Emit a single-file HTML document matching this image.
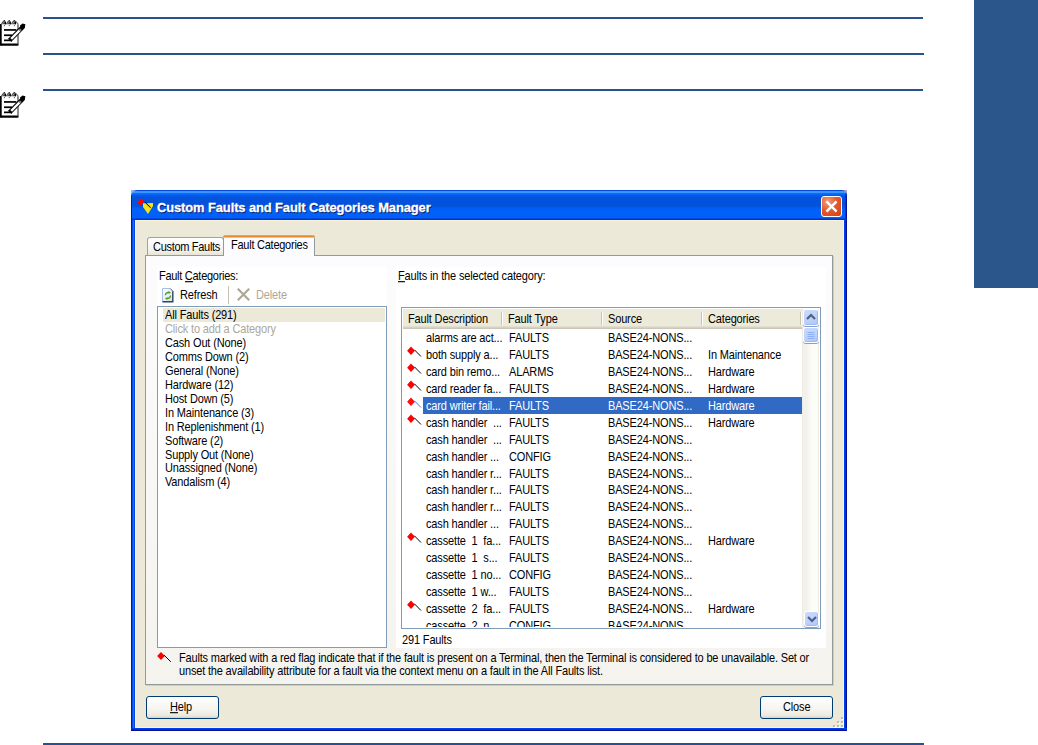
<!DOCTYPE html>
<html><head><meta charset="utf-8"><style>
*{margin:0;padding:0;box-sizing:border-box}
html,body{width:1038px;height:745px;overflow:hidden;background:#fff;font-family:"Liberation Sans",sans-serif;font-size:11px;color:#000}
.a{position:absolute}
.t{position:absolute;line-height:13px;white-space:pre;letter-spacing:-0.15px;transform:scaleY(1.12);transform-origin:0 10px}
u{text-decoration:none;background:linear-gradient(currentColor,currentColor) 0 10.8px/100% 1px no-repeat}
</style></head><body>
<svg width="0" height="0" style="position:absolute"><defs><pattern id="chk" width="2" height="2" patternUnits="userSpaceOnUse"><rect width="2" height="2" fill="#ff0000"/><rect width="1" height="1" fill="#3a60d0"/><rect x="1" y="1" width="1" height="1" fill="#3a60d0"/></pattern></defs></svg>
<div class="a" style="left:43px;top:17px;width:880px;height:2px;background:#27528e"></div>
<div class="a" style="left:43px;top:53px;width:881px;height:2px;background:#27528e"></div>
<div class="a" style="left:43px;top:89px;width:880px;height:2px;background:#27528e"></div>
<div class="a" style="left:43px;top:743px;width:881px;height:2px;background:#27528e"></div>
<div class="a" style="left:974px;top:0;width:64px;height:288px;background:#2b568c"></div>
<svg class="a" style="left:0;top:20px" width="26" height="27" viewBox="0 0 26 27">
  <rect x="1" y="4" width="17" height="20.5" fill="#fff"/>
  <rect x="0" y="4" width="1.7" height="21.5" fill="#000"/>
  <rect x="0" y="23.5" width="18.6" height="2.2" rx="1" fill="#000"/>
  <rect x="17.4" y="4.5" width="1.2" height="20" fill="#444"/>
  <path d="M0.8 4.2 Q2.6 0.2 4.4 0.4 L5.6 4.2 Z M5.8 4.2 Q7.5 0.2 9.3 0.4 L10.5 4.2 Z M10.8 4.2 Q12.5 0.2 14.3 0.4 L15.5 4.2 Z" fill="#5a5a5a"/>
  <path d="M2.5 3.6 Q3.4 2.2 4.2 2.2 M7.4 3.6 Q8.3 2.2 9.1 2.2 M12.4 3.6 Q13.3 2.2 14.1 2.2" fill="none" stroke="#9a9a9a" stroke-width="0.8"/>
  <path d="M15.3 0.9 L18.5 4.6" fill="none" stroke="#777" stroke-width="1.2"/>
  <ellipse cx="5.4" cy="2.9" rx="0.75" ry="1.7" fill="#000"/>
  <ellipse cx="10.3" cy="2.9" rx="0.75" ry="1.7" fill="#000"/>
  <ellipse cx="15.4" cy="2.9" rx="0.75" ry="1.7" fill="#000"/>
  <circle cx="4.4" cy="0.8" r="0.7" fill="#222"/><circle cx="9.3" cy="0.8" r="0.7" fill="#222"/><circle cx="14.3" cy="0.8" r="0.7" fill="#222"/>
  <circle cx="4.4" cy="5.6" r="0.6" fill="#444"/><circle cx="9.3" cy="5.6" r="0.6" fill="#444"/><circle cx="14.3" cy="5.6" r="0.6" fill="#444"/>
  <rect x="4" y="9.1" width="12.5" height="1.7" fill="#000"/>
  <rect x="4" y="14.4" width="8" height="1.7" fill="#000"/>
  <rect x="4" y="19.5" width="6" height="1.7" fill="#000"/>
  <path d="M9.6 20.4 L23 6.8" stroke="#000" stroke-width="4.4"/>
  <path d="M11.2 18.9 L19.6 10.4" stroke="#fff" stroke-width="2.3"/><path d="M19.4 10.6 L20.8 9.2" stroke="#888" stroke-width="2.3"/>
  <path d="M19.8 5.8 L22.5 3.6 L25.3 4.3 L25 7.3 L22.6 9.4 Z" fill="#000"/>
</svg>
<svg class="a" style="left:0;top:92px" width="26" height="27" viewBox="0 0 26 27">
  <rect x="1" y="4" width="17" height="20.5" fill="#fff"/>
  <rect x="0" y="4" width="1.7" height="21.5" fill="#000"/>
  <rect x="0" y="23.5" width="18.6" height="2.2" rx="1" fill="#000"/>
  <rect x="17.4" y="4.5" width="1.2" height="20" fill="#444"/>
  <path d="M0.8 4.2 Q2.6 0.2 4.4 0.4 L5.6 4.2 Z M5.8 4.2 Q7.5 0.2 9.3 0.4 L10.5 4.2 Z M10.8 4.2 Q12.5 0.2 14.3 0.4 L15.5 4.2 Z" fill="#5a5a5a"/>
  <path d="M2.5 3.6 Q3.4 2.2 4.2 2.2 M7.4 3.6 Q8.3 2.2 9.1 2.2 M12.4 3.6 Q13.3 2.2 14.1 2.2" fill="none" stroke="#9a9a9a" stroke-width="0.8"/>
  <path d="M15.3 0.9 L18.5 4.6" fill="none" stroke="#777" stroke-width="1.2"/>
  <ellipse cx="5.4" cy="2.9" rx="0.75" ry="1.7" fill="#000"/>
  <ellipse cx="10.3" cy="2.9" rx="0.75" ry="1.7" fill="#000"/>
  <ellipse cx="15.4" cy="2.9" rx="0.75" ry="1.7" fill="#000"/>
  <circle cx="4.4" cy="0.8" r="0.7" fill="#222"/><circle cx="9.3" cy="0.8" r="0.7" fill="#222"/><circle cx="14.3" cy="0.8" r="0.7" fill="#222"/>
  <circle cx="4.4" cy="5.6" r="0.6" fill="#444"/><circle cx="9.3" cy="5.6" r="0.6" fill="#444"/><circle cx="14.3" cy="5.6" r="0.6" fill="#444"/>
  <rect x="4" y="9.1" width="12.5" height="1.7" fill="#000"/>
  <rect x="4" y="14.4" width="8" height="1.7" fill="#000"/>
  <rect x="4" y="19.5" width="6" height="1.7" fill="#000"/>
  <path d="M9.6 20.4 L23 6.8" stroke="#000" stroke-width="4.4"/>
  <path d="M11.2 18.9 L19.6 10.4" stroke="#fff" stroke-width="2.3"/><path d="M19.4 10.6 L20.8 9.2" stroke="#888" stroke-width="2.3"/>
  <path d="M19.8 5.8 L22.5 3.6 L25.3 4.3 L25 7.3 L22.6 9.4 Z" fill="#000"/>
</svg>
<div class="a" style="left:131px;top:190px;width:716px;height:541px;background:#0040f0;overflow:hidden">
  <div class="a" style="left:0;top:0;width:716px;height:30px;background:linear-gradient(to bottom,#0048e0 0px,#0048e0 1px,#3d95ff 1px,#3d95ff 3px,#0a6cff 3px,#0a6cff 4px,#0058ee 5.5px,#0452dc 7.5px,#0452dc 16px,#0060fa 19px,#0060fa 28px,#0048e0 28px,#0048e0 29px,#0033c8 29px,#0033c8 30px)"></div>
  <div class="a" style="left:0;top:30px;width:4px;height:511px;background:linear-gradient(to right,#0010d0 0px,#0010d0 1px,#0a4ae8 1px,#0a4ae8 2px,#1870f5 2px,#1870f5 3px,#0048e0 3px,#0048e0 4px)"></div>
  <div class="a" style="left:713px;top:30px;width:3px;height:511px;background:linear-gradient(to right,#0040f0 0px,#0040f0 1px,#0030d8 1px,#0030d8 2px,#001090 2px,#001090 3px)"></div>
  <div class="a" style="left:4px;top:538px;width:712px;height:3px;background:linear-gradient(to bottom,#0040f0 0px,#0040f0 1px,#0030d8 1px,#0030d8 2px,#001090 2px,#001090 3px)"></div>
  <div class="a" style="left:0;top:538px;width:4px;height:3px;background:linear-gradient(to bottom,#0040f0 0px,#0030d8 1px,#0010a0 2px,#001090 3px)"></div>
  <div class="a" style="left:4px;top:30px;width:709px;height:508px;background:#ece9d8;border:1px solid #fcf3dc"></div>
</div>
<div class="a" style="left:131px;top:194px;width:1px;height:26px;background:linear-gradient(to bottom,#0030d8,#0018c8 30%,#0010d0)"></div>
<div class="a" style="left:845px;top:194px;width:1px;height:26px;background:#0038e0"></div>
<div class="a" style="left:846px;top:193px;width:1px;height:27px;background:linear-gradient(to bottom,#0030d0,#0010a0 30%,#001090)"></div>
<svg class="a" style="left:131px;top:190px" width="6" height="6" viewBox="0 0 6 6"><path d="M0 0 H6 Q1 0.5 0 6 Z" fill="#98b4ec"/></svg>
<svg class="a" style="left:842px;top:190px" width="5" height="5" viewBox="0 0 5 5"><path d="M0 0 H5 V5 Q4.5 0.6 0 0 Z" fill="#b8a0b8"/></svg>
<svg class="a" style="left:136px;top:197px" width="18" height="18" viewBox="0 0 18 18">
  <path d="M1.1 5.5 L5.4 1 L8.9 4.6 L4.5 8.9 Z" fill="#ff0000"/>
  <path d="M7 6.2 L17 6 L17 9 L12 17 L7 10 Z" fill="#f2e418"/>
  <path d="M9.1 5.2 L14.6 10.7" stroke="#000" stroke-width="1.1" stroke-dasharray="1 0.4"/>
</svg>
<div class="a" style="left:158px;top:201px;font-weight:bold;font-size:13.7px;line-height:16px;letter-spacing:-0.1px;white-space:pre;transform:scaleX(0.943);transform-origin:0 0;color:#0a1e6e;-webkit-text-stroke:0.3px #0a1e6e">Custom Faults and Fault Categories Manager</div>
<div class="a" style="left:157px;top:200px;font-weight:bold;font-size:13.7px;line-height:16px;letter-spacing:-0.1px;white-space:pre;transform:scaleX(0.943);transform-origin:0 0;color:#fff;-webkit-text-stroke:0.3px #fff">Custom Faults and Fault Categories Manager</div>
<div class="a" style="left:821px;top:196px;width:21px;height:21px;border:1px solid #fff;border-radius:3px;background:radial-gradient(circle at 30% 25%,#f0a080 0%,#e35a30 45%,#d24010 100%)"></div>
<svg class="a" style="left:821px;top:196px" width="21" height="21" viewBox="0 0 21 21"><path d="M6.3 6.3 L14.7 14.7 M14.7 6.3 L6.3 14.7" stroke="#fff" stroke-width="2.4" stroke-linecap="square"/></svg>
<div class="a" style="left:145px;top:255px;width:688px;height:430px;border:1px solid #919b9c;background:linear-gradient(to bottom,#fcfcfe 0%,#f4f3ee 100%);box-shadow:1px 1px 0 #d0cebf"></div>
<div class="a" style="left:147px;top:237px;width:77px;height:18px;border:1px solid #91a7b4;border-bottom:none;border-radius:3px 3px 0 0;background:linear-gradient(to bottom,#ffffff,#f4f3ee 70%,#e6e3d6)"></div>
<div class="t" style="left:153px;top:241px;letter-spacing:-0.3px">Custom Faults</div>
<div class="a" style="left:223px;top:235px;width:92px;height:21px;border:1px solid #919b9c;border-top:none;border-bottom:none;border-radius:3px 3px 0 0;background:#fcfcfe"></div>
<div class="a" style="left:223px;top:235px;width:92px;height:3px;border-radius:3px 3px 0 0;background:linear-gradient(to bottom,#e9a060 0px,#e9a060 1px,#e68b2c 1px,#e68b2c 2px,#ffc73c 2px,#ffc73c 3px)"></div>
<div class="t" style="left:231px;top:239px;letter-spacing:-0.25px">Fault Categories</div>
<div class="a" style="left:157px;top:267px;width:230px;height:381px;background:#fff"></div>
<div class="t" style="left:159px;top:270px;letter-spacing:-0.28px">Fault <u>C</u>ategories:</div>
<svg class="a" style="left:162px;top:288px" width="12" height="15" viewBox="0 0 12 15">
  <defs><linearGradient id="pg" x1="0" y1="0" x2="1" y2="1"><stop offset="0" stop-color="#ffffff"/><stop offset="1" stop-color="#d4def0"/></linearGradient></defs>
  <path d="M0.5 0.5 H8.5 L11 3 V14 H0.5 Z" fill="url(#pg)"/>
  <path d="M0.5 14 V0.5 H8.2" fill="none" stroke="#a8c0e8" stroke-width="1"/>
  <path d="M8.2 0.5 L11.2 3.5" fill="none" stroke="#486088" stroke-width="1"/>
  <path d="M10.8 3.2 V13.8 H0.5" fill="none" stroke="#2c4466" stroke-width="1.4"/>
  <path d="M3.3 7.3 Q3.5 4.6 6.8 4.4" fill="none" stroke="#4c9c18" stroke-width="1.15"/>
  <path d="M6.5 2.9 L8.9 4.4 L6.5 5.9 Z" fill="#4c9c18"/>
  <path d="M8.5 7.6 Q8.3 10.3 5 10.5" fill="none" stroke="#4c9c18" stroke-width="1.15"/>
  <path d="M5.4 9 L3 10.5 L5.4 12 Z" fill="#4c9c18"/>
</svg>
<div class="t" style="left:180px;top:289px;">Refresh</div>
<div class="a" style="left:228px;top:286px;width:1px;height:18px;background:#c5c2b2"></div>
<svg class="a" style="left:236px;top:287px" width="15" height="15" viewBox="0 0 15 15"><path d="M1.8 1.8 L13.2 13.2 M13.2 1.8 L1.8 13.2" stroke="#aca899" stroke-width="2.2"/></svg>
<div class="t" style="left:256px;top:289px;color:#aca899">Delete</div>
<div class="a" style="left:157px;top:306px;width:230px;height:342px;border:1px solid #7f9db9;background:#fff"></div>
<div class="a" style="left:163px;top:308px;width:222px;height:14px;background:#ece9d8"></div>
<div class="t" style="left:165px;top:309px;">All Faults (291)</div>
<div class="t" style="left:165px;top:323px;"><span style="color:#aca899">Click to add a Category</span></div>
<div class="t" style="left:165px;top:337px;">Cash Out (None)</div>
<div class="t" style="left:165px;top:351px;">Comms Down (2)</div>
<div class="t" style="left:165px;top:365px;">General (None)</div>
<div class="t" style="left:165px;top:379px;">Hardware (12)</div>
<div class="t" style="left:165px;top:393px;">Host Down (5)</div>
<div class="t" style="left:165px;top:407px;">In Maintenance (3)</div>
<div class="t" style="left:165px;top:421px;">In Replenishment (1)</div>
<div class="t" style="left:165px;top:435px;">Software (2)</div>
<div class="t" style="left:165px;top:449px;">Supply Out (None)</div>
<div class="t" style="left:165px;top:462px;">Unassigned (None)</div>
<div class="t" style="left:165px;top:476px;">Vandalism (4)</div>
<div class="a" style="left:396px;top:267px;width:430px;height:381px;background:#fff"></div>
<div class="t" style="left:398px;top:270px;"><u>F</u>aults in the selected category:</div>
<div class="a" style="left:401px;top:307px;width:420px;height:322px;border:1px solid #7f9db9;background:#fff;overflow:hidden">
<div class="a" style="left:1px;top:1px;width:399px;height:20px;background:linear-gradient(to bottom,#ebeadb 0px,#ebeadb 17px,#e2decd 17px,#e2decd 18px,#d6d2c2 18px,#d6d2c2 19px,#cbc7b8 19px,#cbc7b8 20px)"></div>
<div class="a" style="left:99px;top:4px;width:1px;height:13px;background:#c7c5b2;box-shadow:1px 0 0 #fff"></div>
<div class="a" style="left:199px;top:4px;width:1px;height:13px;background:#c7c5b2;box-shadow:1px 0 0 #fff"></div>
<div class="a" style="left:299px;top:4px;width:1px;height:13px;background:#c7c5b2;box-shadow:1px 0 0 #fff"></div>
<div class="a" style="left:398px;top:4px;width:1px;height:13px;background:#c7c5b2;box-shadow:1px 0 0 #fff"></div>
<div class="t" style="left:6px;top:5px;">Fault Description</div>
<div class="t" style="left:106px;top:5px;">Fault Type</div>
<div class="t" style="left:206px;top:5px;">Source</div>
<div class="t" style="left:306px;top:5px;">Categories</div>
<div class="t" style="left:24px;top:24px;">alarms are act...</div>
<div class="t" style="left:107px;top:24px;">FAULTS</div>
<div class="t" style="left:206px;top:24px;">BASE24-NONS...</div>
<svg class="a" style="left:4px;top:37.5px" width="16" height="14" viewBox="0 0 16 14"><path d="M1.1 4.7 L5 0.5 L8.9 4.7 L5 8.9 Z" fill="#ff0000"/><path d="M8.3 3.7 L15 10.5" stroke="#000" stroke-width="1"/></svg>
<div class="t" style="left:24px;top:41px;">both supply a...</div>
<div class="t" style="left:107px;top:41px;">FAULTS</div>
<div class="t" style="left:206px;top:41px;">BASE24-NONS...</div>
<div class="t" style="left:306px;top:41px;">In Maintenance</div>
<svg class="a" style="left:4px;top:54.5px" width="16" height="14" viewBox="0 0 16 14"><path d="M1.1 4.7 L5 0.5 L8.9 4.7 L5 8.9 Z" fill="#ff0000"/><path d="M8.3 3.7 L15 10.5" stroke="#000" stroke-width="1"/></svg>
<div class="t" style="left:24px;top:58px;">card bin remo...</div>
<div class="t" style="left:107px;top:58px;">ALARMS</div>
<div class="t" style="left:206px;top:58px;">BASE24-NONS...</div>
<div class="t" style="left:306px;top:58px;">Hardware</div>
<svg class="a" style="left:4px;top:71.5px" width="16" height="14" viewBox="0 0 16 14"><path d="M1.1 4.7 L5 0.5 L8.9 4.7 L5 8.9 Z" fill="#ff0000"/><path d="M8.3 3.7 L15 10.5" stroke="#000" stroke-width="1"/></svg>
<div class="t" style="left:24px;top:75px;">card reader fa...</div>
<div class="t" style="left:107px;top:75px;">FAULTS</div>
<div class="t" style="left:206px;top:75px;">BASE24-NONS...</div>
<div class="t" style="left:306px;top:75px;">Hardware</div>
<div class="a" style="left:21px;top:89px;width:379px;height:17px;background:#316ac5"></div>
<svg class="a" style="left:4px;top:88.5px" width="16" height="14" viewBox="0 0 16 14"><path d="M1.1 4.7 L5 0.5 L8.9 4.7 L5 8.9 Z" fill="url(#chk)"/><path d="M8.3 3.7 L15 10.5" stroke="#3a78e0" stroke-width="1"/></svg>
<div class="t" style="left:24px;top:92px;color:#fff">card writer fail...</div>
<div class="t" style="left:107px;top:92px;color:#fff">FAULTS</div>
<div class="t" style="left:206px;top:92px;color:#fff">BASE24-NONS...</div>
<div class="t" style="left:306px;top:92px;color:#fff">Hardware</div>
<svg class="a" style="left:4px;top:105.5px" width="16" height="14" viewBox="0 0 16 14"><path d="M1.1 4.7 L5 0.5 L8.9 4.7 L5 8.9 Z" fill="#ff0000"/><path d="M8.3 3.7 L15 10.5" stroke="#000" stroke-width="1"/></svg>
<div class="t" style="left:24px;top:109px;">cash handler  ...</div>
<div class="t" style="left:107px;top:109px;">FAULTS</div>
<div class="t" style="left:206px;top:109px;">BASE24-NONS...</div>
<div class="t" style="left:306px;top:109px;">Hardware</div>
<div class="t" style="left:24px;top:126px;">cash handler  ...</div>
<div class="t" style="left:107px;top:126px;">FAULTS</div>
<div class="t" style="left:206px;top:126px;">BASE24-NONS...</div>
<div class="t" style="left:24px;top:143px;">cash handler ...</div>
<div class="t" style="left:107px;top:143px;">CONFIG</div>
<div class="t" style="left:206px;top:143px;">BASE24-NONS...</div>
<div class="t" style="left:24px;top:160px;">cash handler r...</div>
<div class="t" style="left:107px;top:160px;">FAULTS</div>
<div class="t" style="left:206px;top:160px;">BASE24-NONS...</div>
<div class="t" style="left:24px;top:176px;">cash handler r...</div>
<div class="t" style="left:107px;top:176px;">FAULTS</div>
<div class="t" style="left:206px;top:176px;">BASE24-NONS...</div>
<div class="t" style="left:24px;top:193px;">cash handler r...</div>
<div class="t" style="left:107px;top:193px;">FAULTS</div>
<div class="t" style="left:206px;top:193px;">BASE24-NONS...</div>
<div class="t" style="left:24px;top:210px;">cash handler ...</div>
<div class="t" style="left:107px;top:210px;">FAULTS</div>
<div class="t" style="left:206px;top:210px;">BASE24-NONS...</div>
<svg class="a" style="left:4px;top:223.5px" width="16" height="14" viewBox="0 0 16 14"><path d="M1.1 4.7 L5 0.5 L8.9 4.7 L5 8.9 Z" fill="#ff0000"/><path d="M8.3 3.7 L15 10.5" stroke="#000" stroke-width="1"/></svg>
<div class="t" style="left:24px;top:227px;">cassette  1  fa...</div>
<div class="t" style="left:107px;top:227px;">FAULTS</div>
<div class="t" style="left:206px;top:227px;">BASE24-NONS...</div>
<div class="t" style="left:306px;top:227px;">Hardware</div>
<div class="t" style="left:24px;top:244px;">cassette  1  s...</div>
<div class="t" style="left:107px;top:244px;">FAULTS</div>
<div class="t" style="left:206px;top:244px;">BASE24-NONS...</div>
<div class="t" style="left:24px;top:261px;">cassette  1 no...</div>
<div class="t" style="left:107px;top:261px;">CONFIG</div>
<div class="t" style="left:206px;top:261px;">BASE24-NONS...</div>
<div class="t" style="left:24px;top:278px;">cassette  1 w...</div>
<div class="t" style="left:107px;top:278px;">FAULTS</div>
<div class="t" style="left:206px;top:278px;">BASE24-NONS...</div>
<svg class="a" style="left:4px;top:291.5px" width="16" height="14" viewBox="0 0 16 14"><path d="M1.1 4.7 L5 0.5 L8.9 4.7 L5 8.9 Z" fill="#ff0000"/><path d="M8.3 3.7 L15 10.5" stroke="#000" stroke-width="1"/></svg>
<div class="t" style="left:24px;top:295px;">cassette  2  fa...</div>
<div class="t" style="left:107px;top:295px;">FAULTS</div>
<div class="t" style="left:206px;top:295px;">BASE24-NONS...</div>
<div class="t" style="left:306px;top:295px;">Hardware</div>
<div class="t" style="left:24px;top:312px;">cassette  2  n...</div>
<div class="t" style="left:107px;top:312px;">CONFIG</div>
<div class="t" style="left:206px;top:312px;">BASE24-NONS...</div>
<div class="a" style="left:0;top:319px;width:400px;height:1px;background:#fff"></div>
<div class="a" style="left:400px;top:1px;width:17px;height:319px;background:linear-gradient(to right,#edebe2 0px,#edebe2 1px,#f3f1ec 1px,#f3f1ec 5px,#f8f8f6 7px,#f8f8f6 8px,#fdfdf8 10px,#fdfdf8 16px,#edebe2 16px,#edebe2 17px)"></div>
<div class="a" style="left:401px;top:1px;width:16px;height:17px;border:1px solid #fff;border-radius:3px;background:linear-gradient(160deg,#cbdafc 0%,#bcd0fb 60%,#b0c6f6 100%);box-shadow:inset -1px -1px 0 #a4b9e6, 0 1px 0 #7fa0e0"></div>
<svg class="a" style="left:401px;top:1px" width="16" height="17" viewBox="0 0 16 17"><path d="M4 10 L8 6 L12 10" fill="none" stroke="#4d6185" stroke-width="2.2"/></svg>
<div class="a" style="left:401px;top:18.5px;width:16px;height:16.5px;border:1px solid #fff;border-radius:3px;background:linear-gradient(160deg,#cbdafc 0%,#bcd0fb 60%,#b0c6f6 100%);box-shadow:inset -1px -1px 0 #a4b9e6, 0 1px 0 #7fa0e0"></div>
<svg class="a" style="left:401px;top:18.5px" width="16" height="17" viewBox="0 0 16 17"><path d="M4.5 5.5 H11.5 M4.5 7.5 H11.5 M4.5 9.5 H11.5 M4.5 11.5 H11.5" stroke="#8cb0f8" stroke-width="1"/></svg>
<div class="a" style="left:401.5px;top:302.5px;width:15.5px;height:16px;border:1px solid #fff;border-radius:3px;background:linear-gradient(160deg,#cbdafc 0%,#bcd0fb 60%,#b0c6f6 100%);box-shadow:inset -1px -1px 0 #a4b9e6, 0 1px 0 #7fa0e0"></div>
<svg class="a" style="left:401.5px;top:302.5px" width="16" height="16" viewBox="0 0 16 16"><path d="M4 6 L8 10 L12 6" fill="none" stroke="#4d6185" stroke-width="2.2"/></svg>
</div>
<div class="t" style="left:402px;top:634px;">291 Faults</div>
<svg class="a" style="left:156px;top:651px" width="16" height="12" viewBox="0 0 16 12"><path d="M1.1 5 L5 1.1 L8.9 5 L5 8.9 Z" fill="#ff0000"/><path d="M8.2 4.2 L14.8 10.8" stroke="#000" stroke-width="1"/></svg>
<div class="t" style="left:179px;top:652px;letter-spacing:-0.17px">Faults marked with a red flag indicate that if the fault is present on a Terminal, then the Terminal is considered to be unavailable. Set or</div>
<div class="t" style="left:179px;top:665px;letter-spacing:-0.17px">unset the availability attribute for a fault via the context menu on a fault in the All Faults list.</div>
<div class="a" style="left:146px;top:696px;width:73px;height:23px;border:1px solid #003c74;border-radius:3px;background:linear-gradient(to bottom,#ffffff 0%,#f5f4ef 60%,#ebe8dd 90%,#d6d0c5 100%)"></div>
<div class="a" style="left:760px;top:696px;width:73px;height:23px;border:1px solid #003c74;border-radius:3px;background:linear-gradient(to bottom,#ffffff 0%,#f5f4ef 60%,#ebe8dd 90%,#d6d0c5 100%)"></div>
<div class="t" style="left:170px;top:701px;"><u>H</u>elp</div>
<div class="t" style="left:783px;top:701px;">Close</div>
<div class="a" style="left:841px;top:717px;width:2px;height:2px;background:#c0bcab;box-shadow:1px 1px 0 #fff"></div>
<div class="a" style="left:837px;top:721px;width:2px;height:2px;background:#c0bcab;box-shadow:1px 1px 0 #fff"></div>
<div class="a" style="left:841px;top:721px;width:2px;height:2px;background:#c0bcab;box-shadow:1px 1px 0 #fff"></div>
<div class="a" style="left:833px;top:725px;width:2px;height:2px;background:#c0bcab;box-shadow:1px 1px 0 #fff"></div>
<div class="a" style="left:837px;top:725px;width:2px;height:2px;background:#c0bcab;box-shadow:1px 1px 0 #fff"></div>
<div class="a" style="left:841px;top:725px;width:2px;height:2px;background:#c0bcab;box-shadow:1px 1px 0 #fff"></div>
</body></html>
